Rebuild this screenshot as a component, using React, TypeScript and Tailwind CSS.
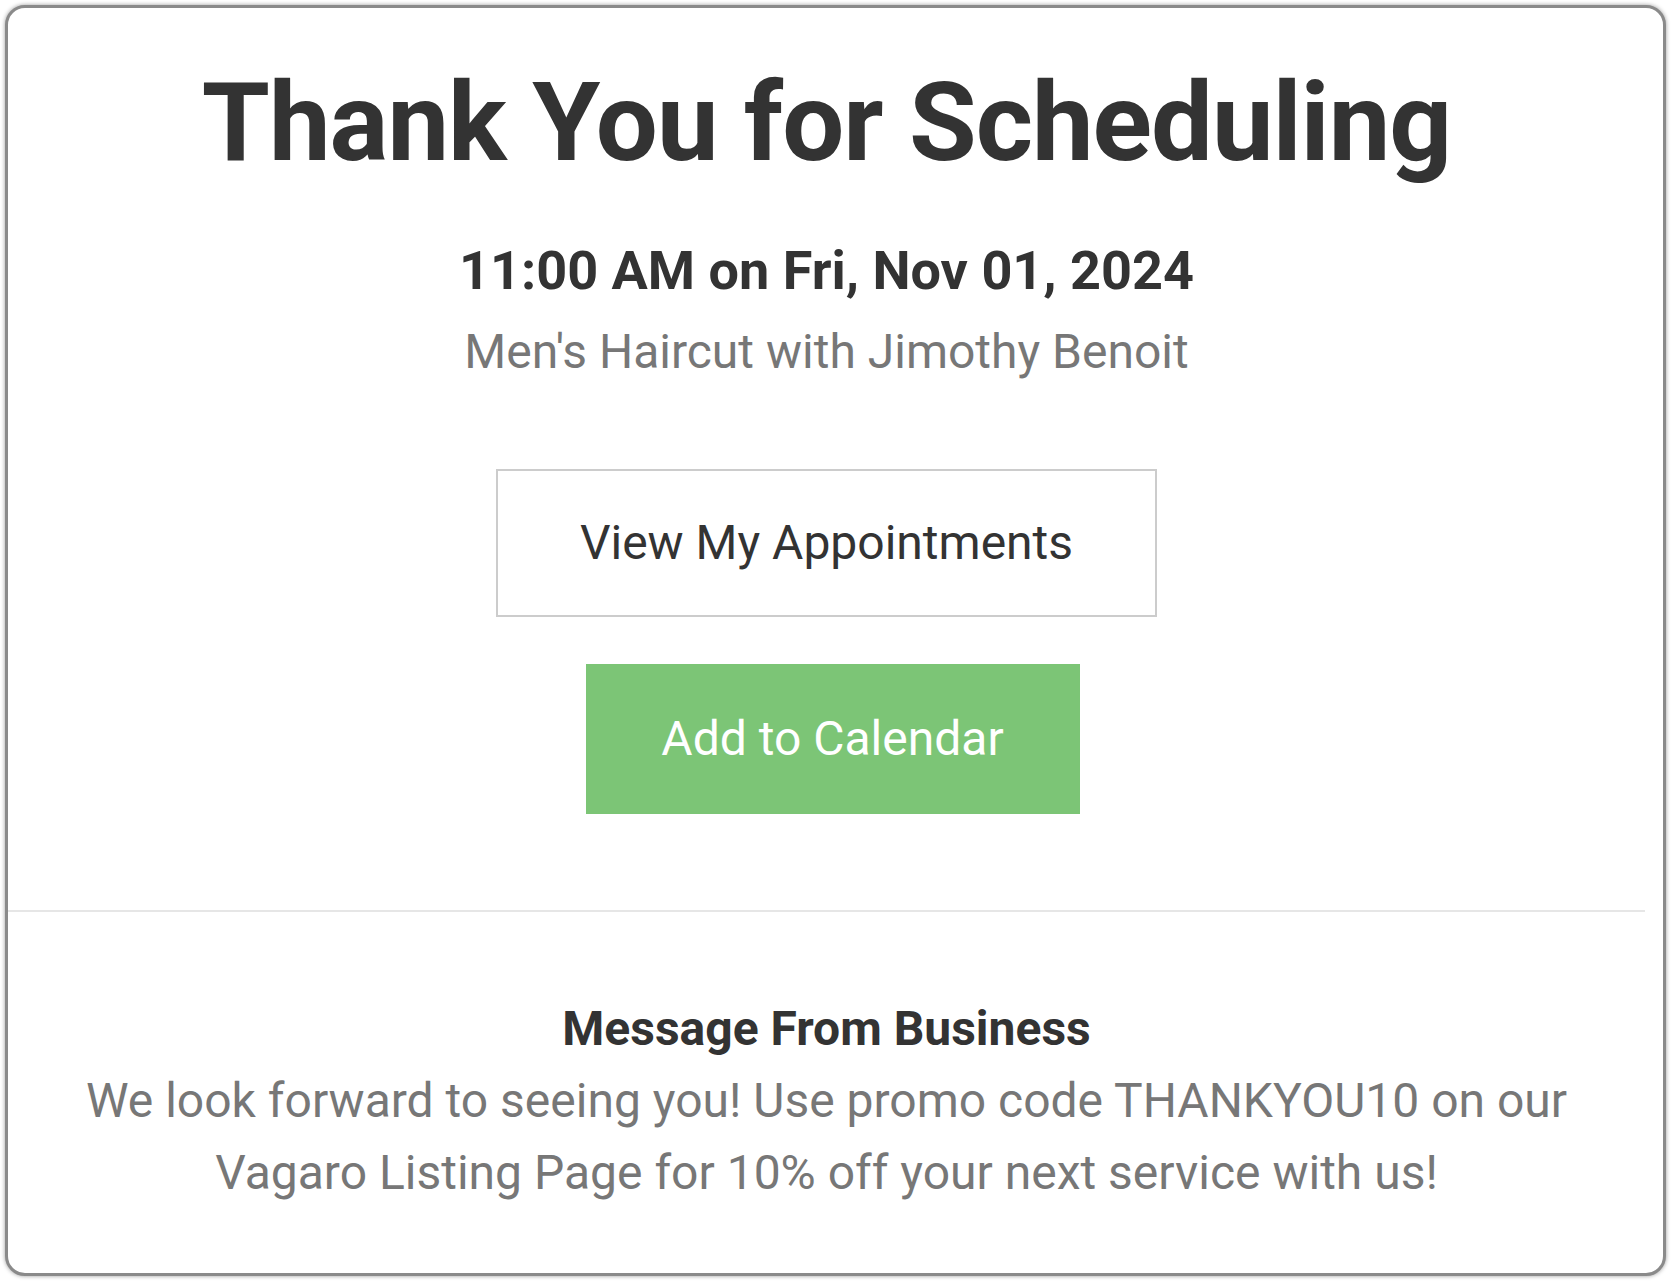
export default function App() {
  return (
    <div className="w-[1671px] h-[1281px] bg-white p-[5px]" style={{ fontFamily: "Roboto, 'Noto Sans', sans-serif" }}>
      <div className="h-[1271px] rounded-[20px] border-[3px] border-[#8a8a8a] bg-white shadow-[0_0_4px_rgba(0,0,0,0.4)] overflow-hidden">
        <div className="mr-[18px] flex flex-col items-center text-center">
          <h1 className="mt-[60px] text-[110px] leading-none font-bold text-[#333] tracking-[-1px]">
            Thank You for Scheduling
          </h1>
          <div className="mt-[66px] text-[54px] leading-none font-bold text-[#333]">
            11:00 AM on Fri, Nov 01, 2024
          </div>
          <div className="mt-[30px] text-[48px] leading-none text-[#777]">
            Men's Haircut with Jimothy Benoit
          </div>
          <button className="mt-[93px] w-[661px] h-[148px] border-2 border-[#cccccc] bg-white text-[48px] text-[#333]">
            View My Appointments
          </button>
          <button className="mt-[47px] ml-[12px] w-[494px] h-[150px] bg-[#7cc576] text-[48px] text-white">
            Add to Calendar
          </button>
        </div>
        <div className="mt-[96px] mr-[18px] h-[2px] bg-[#e6e6e6]" />
        <div className="mr-[18px] flex flex-col items-center text-center">
          <div className="mt-[93px] text-[48px] leading-none font-bold text-[#333]">
            Message From Business
          </div>
          <p className="mt-[12px] text-[48px] leading-[72px] text-[#777]">
            We look forward to seeing you! Use promo code THANKYOU10 on our
            <br />
            Vagaro Listing Page for 10% off your next service with us!
          </p>
        </div>
      </div>
    </div>
  );
}
